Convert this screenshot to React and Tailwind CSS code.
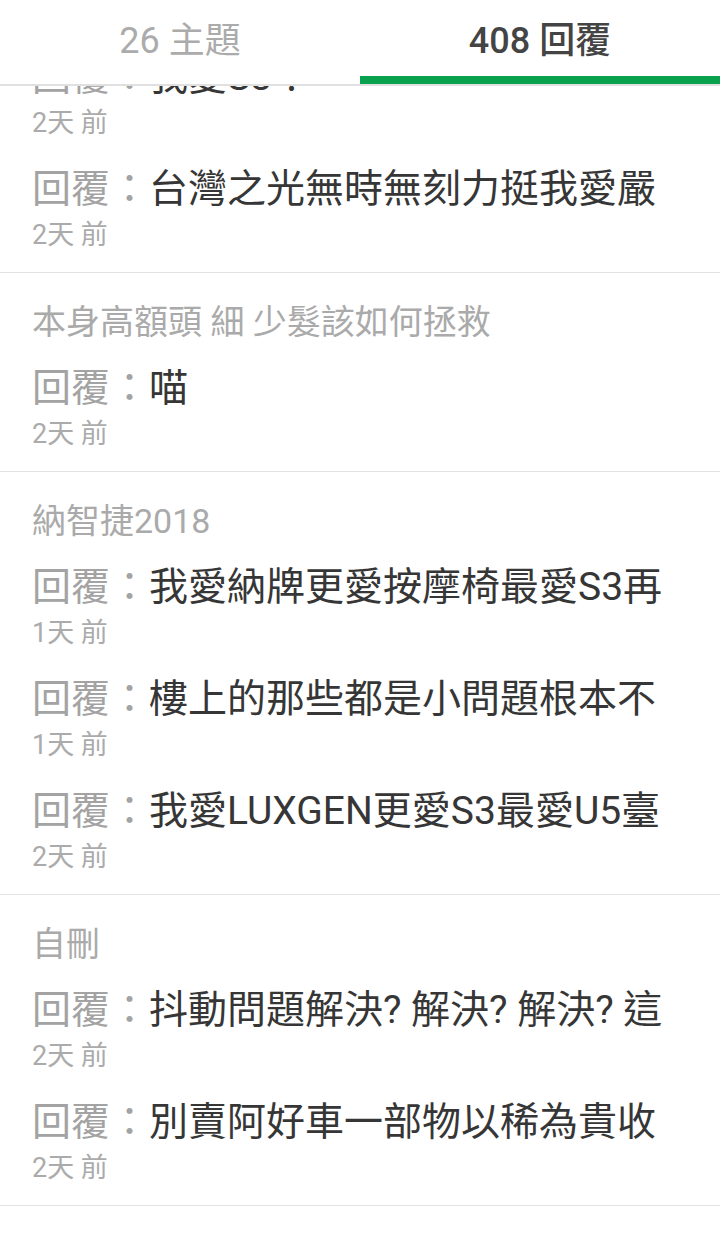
import React from 'react';

const groups = [
    {
        title: null,
        replies: [
            { text: '我愛S3！', time: '2天 前' },
            { text: '台灣之光無時無刻力挺我愛嚴', time: '2天 前' },
        ],
    },
    {
        title: '本身高額頭 細 少髮該如何拯救',
        replies: [{ text: '喵', time: '2天 前' }],
    },
    {
        title: '納智捷2018',
        replies: [
            { text: '我愛納牌更愛按摩椅最愛S3再', time: '1天 前' },
            { text: '樓上的那些都是小問題根本不', time: '1天 前' },
            { text: '我愛LUXGEN更愛S3最愛U5臺', time: '2天 前' },
        ],
    },
    {
        title: '自刪',
        replies: [
            { text: '抖動問題解決? 解決? 解決? 這', time: '2天 前' },
            { text: '別賣阿好車一部物以稀為貴收', time: '2天 前' },
        ],
    },
];

const ReplyRow = ({ reply }) => (
    <div className="pt-[20px]">
        <div className="text-[39px] leading-[50px] whitespace-nowrap overflow-hidden">
            <span className="text-[#a3a3a3]">回覆：</span>
            <span className="text-[#363636]">{reply.text}</span>
        </div>
        <div className="text-[27px] leading-[42px] text-[#ababab]">{reply.time}</div>
    </div>
);

export default function App() {
    return (
        <div className="w-[720px] h-[1235px] bg-white flex flex-col overflow-hidden font-['Roboto','Noto_Sans_CJK_TC',sans-serif]">
            {/* tabs */}
            <div className="h-[86px] shrink-0 flex border-b-2 border-[#e0e0e0] bg-white">
                <div className="flex-1 flex flex-col">
                    <div className="flex-1 flex items-center justify-center pt-[6px] text-[36px] text-[#ababab]">26 主題</div>
                    <div className="h-[8px]"></div>
                </div>
                <div className="flex-1 flex flex-col">
                    <div className="flex-1 flex items-center justify-center pt-[6px] text-[36px] font-medium text-[#444444]">408 回覆</div>
                    <div className="h-[8px] bg-[#0aa14e]"></div>
                </div>
            </div>

            {/* list (scrolled) */}
            <div className="flex-1 overflow-hidden">
                <div className="-mt-[124px]">
                    {groups.map((g, i) => (
                        <div key={i} className="pl-[32px] pr-4 pt-[28px] pb-[16px] border-b border-[#e2e2e2]">
                            {g.title ? (
                                <div className="text-[34px] leading-[42px] text-[#aaaaaa] whitespace-nowrap">{g.title}</div>
                            ) : (
                                <div className="h-[42px]"></div>
                            )}
                            {g.replies.map((r, j) => (
                                <ReplyRow key={j} reply={r} />
                            ))}
                        </div>
                    ))}
                </div>
            </div>
        </div>
    );
}
